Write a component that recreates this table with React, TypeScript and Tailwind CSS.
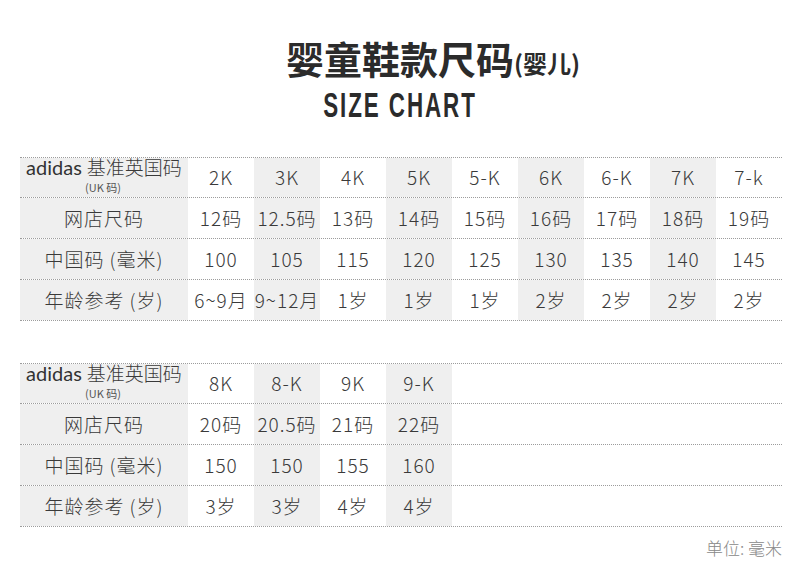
import React from 'react';

const CJK = "font-['Noto_Sans_CJK_SC','Noto_Sans',sans-serif]";

interface SizeTable {
  sizes: string[];
  shop: string[];
  cn: string[];
  age: string[];
}

const babyTables: SizeTable[] = [
  {
    sizes: ['2K', '3K', '4K', '5K', '5-K', '6K', '6-K', '7K', '7-k'],
    shop: ['12码', '12.5码', '13码', '14码', '15码', '16码', '17码', '18码', '19码'],
    cn: ['100', '105', '115', '120', '125', '130', '135', '140', '145'],
    age: ['6~9月', '9~12月', '1岁', '1岁', '1岁', '2岁', '2岁', '2岁', '2岁'],
  },
  {
    sizes: ['8K', '8-K', '9K', '9-K'],
    shop: ['20码', '20.5码', '21码', '22码'],
    cn: ['150', '150', '155', '160'],
    age: ['3岁', '3岁', '4岁', '4岁'],
  },
];

const Row = ({ label, values, first }: { label: React.ReactNode; values: string[]; first?: boolean }) => (
  <div
    className={`flex h-[41px] border-b border-dotted border-[#9c9c9c] ${first ? 'border-t' : ''}`}
  >
    <div className="w-[168px] flex items-center justify-center bg-[#efefef] text-[19px] font-light tracking-[1px] text-[#3a3a3a]">
      {label}
    </div>
    {values.map((v, i) => (
      <div
        key={i}
        className={`w-[66px] flex items-center justify-center text-[19px] font-light tracking-[1px] whitespace-nowrap text-[#3a3a3a] ${
          i % 2 === 1 ? 'bg-[#efefef]' : ''
        }`}
      >
        {v}
      </div>
    ))}
  </div>
);

// header cell: brand + sub label stacked
const HeaderLabel = () => (
  <div className="flex flex-col items-center leading-none -mt-[6px] tracking-normal">
    <div className="flex items-baseline">
      <span className="font-['Lato',sans-serif] font-normal text-[20px] mr-[5px] text-[#333]">adidas</span>
      <span className="text-[19px]">基准英国码</span>
    </div>
    <span className="text-[11px] font-normal mt-[5px] ml-[-2px] text-[#555]">(UK 码)</span>
  </div>
);

export default function App() {
  return (
    <div className={`w-[800px] h-[571px] bg-white text-[#3a3a3a] ${CJK}`}>
      <div className="flex flex-col items-center pt-[39px]">
        <h1 className="relative text-[38px] font-bold leading-none text-[#2b2b2b]">
          婴童鞋款尺码
          <span className="absolute left-full bottom-[2px] text-[24px] whitespace-nowrap">(婴儿)</span>
        </h1>
        <div className="mt-[10px] font-['Liberation_Sans',sans-serif] font-bold text-[35px] leading-none tracking-[3px] text-[#2b2b2b] scale-x-[0.64] whitespace-nowrap">
          SIZE CHART
        </div>
      </div>

      <div className="ml-[20px] mt-[35px] w-[762px]">
        {babyTables.map((t, k) => (
          <div key={k} className={k > 0 ? 'mt-[42px]' : ''}>
            <Row label={<HeaderLabel />} values={t.sizes} first />
            <Row label="网店尺码" values={t.shop} />
            <Row label="中国码 (毫米)" values={t.cn} />
            <Row label="年龄参考 (岁)" values={t.age} />
          </div>
        ))}
        <div className="flex justify-end mt-[8px] text-[17px] font-light text-[#888]">单位: 毫米</div>
      </div>
    </div>
  );
}
